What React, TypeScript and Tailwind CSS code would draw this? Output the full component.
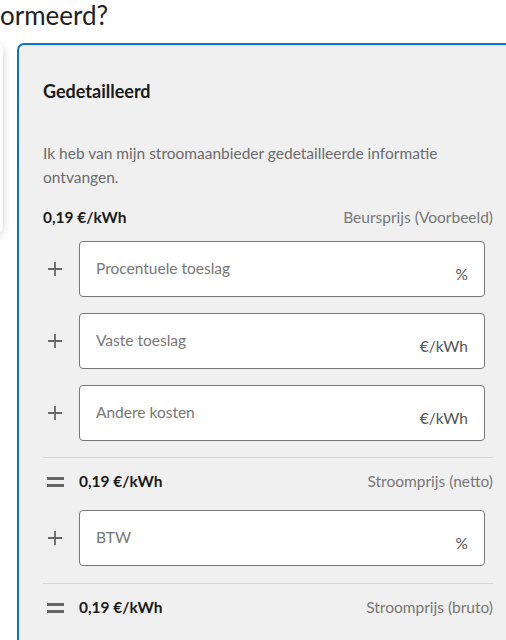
import React from 'react';

const font = { fontFamily: 'Lato, "Open Sans", sans-serif' };

function PlusIcon() {
  return (
    <svg width="16" height="16" viewBox="0 0 16 16" className="text-[#666]">
      <path d="M8 1v14M1 8h14" stroke="currentColor" strokeWidth="1.8" />
    </svg>
  );
}

function EqualsIcon() {
  return (
    <svg width="17" height="12" viewBox="0 0 17 12" className="text-[#666]">
      <rect x="0" y="1" width="17" height="3" fill="currentColor" />
      <rect x="0" y="8" width="17" height="3" fill="currentColor" />
    </svg>
  );
}

function InputRow({ label, unit }: { label: string; unit: string }) {
  return (
    <div className="flex items-center pr-2">
      <div className="w-9 flex items-center pl-[4px]">
        <PlusIcon />
      </div>
      <div className="flex-1 h-14 flex items-center justify-between bg-white border border-[#777] rounded-[4px] pl-4 pr-4">
        <span className="text-[15.5px] text-[#777]">{label}</span>
        <span className="text-[15.5px] text-[#555] pt-3">{unit}</span>
      </div>
    </div>
  );
}

function TotalRow({ label }: { label: string }) {
  return (
    <div className="flex items-center h-6">
      <div className="w-9 flex items-center pl-[4px]">
        <EqualsIcon />
      </div>
      <span className="text-[15.5px] font-bold text-[#1a1a1a]">0,19 €/kWh</span>
      <span className="ml-auto text-[15.5px] text-[#777]">{label}</span>
    </div>
  );
}

export default function App() {
  return (
    <div className="w-[506px] h-[640px] overflow-hidden bg-white" style={font}>
      <h2 className="text-[26px] leading-[30px] text-[#222]">ormeerd?</h2>

      <div className="flex items-start mt-[13px]">
        <div className="shrink-0 w-[300px] h-[190px] -ml-[297px] bg-white rounded-md shadow-[0_2px_8px_rgba(0,0,0,0.18)]" />

        <div className="shrink-0 w-[502px] ml-[14px] h-[620px] bg-[#f0f0f0] border-2 border-[#0a72d3] rounded-t-[7px] pt-[34px] px-6">
          <h3 className="text-[18px] leading-6 font-bold text-[#1a1a1a]">Gedetailleerd</h3>

          <p className="mt-[38px] text-[15.5px] leading-6 text-[#6b6b6b]">
            Ik heb van mijn stroomaanbieder gedetailleerde informatie ontvangen.
          </p>

          <div className="mt-[17px] flex items-center h-6">
            <span className="text-[15.5px] font-bold text-[#1a1a1a]">0,19 €/kWh</span>
            <span className="ml-auto text-[15.5px] text-[#777]">Beursprijs (Voorbeeld)</span>
          </div>

          <div className="mt-[11px] flex flex-col gap-4">
            <InputRow label="Procentuele toeslag" unit="%" />
            <InputRow label="Vaste toeslag" unit="€/kWh" />
            <InputRow label="Andere kosten" unit="€/kWh" />
          </div>

          <div className="mt-4 border-t border-[#d6d6d6]" />
          <div className="mt-3">
            <TotalRow label="Stroomprijs (netto)" />
          </div>

          <div className="mt-4">
            <InputRow label="BTW" unit="%" />
          </div>

          <div className="mt-[17px] border-t border-[#d6d6d6]" />
          <div className="mt-3">
            <TotalRow label="Stroomprijs (bruto)" />
          </div>
        </div>
      </div>
    </div>
  );
}
